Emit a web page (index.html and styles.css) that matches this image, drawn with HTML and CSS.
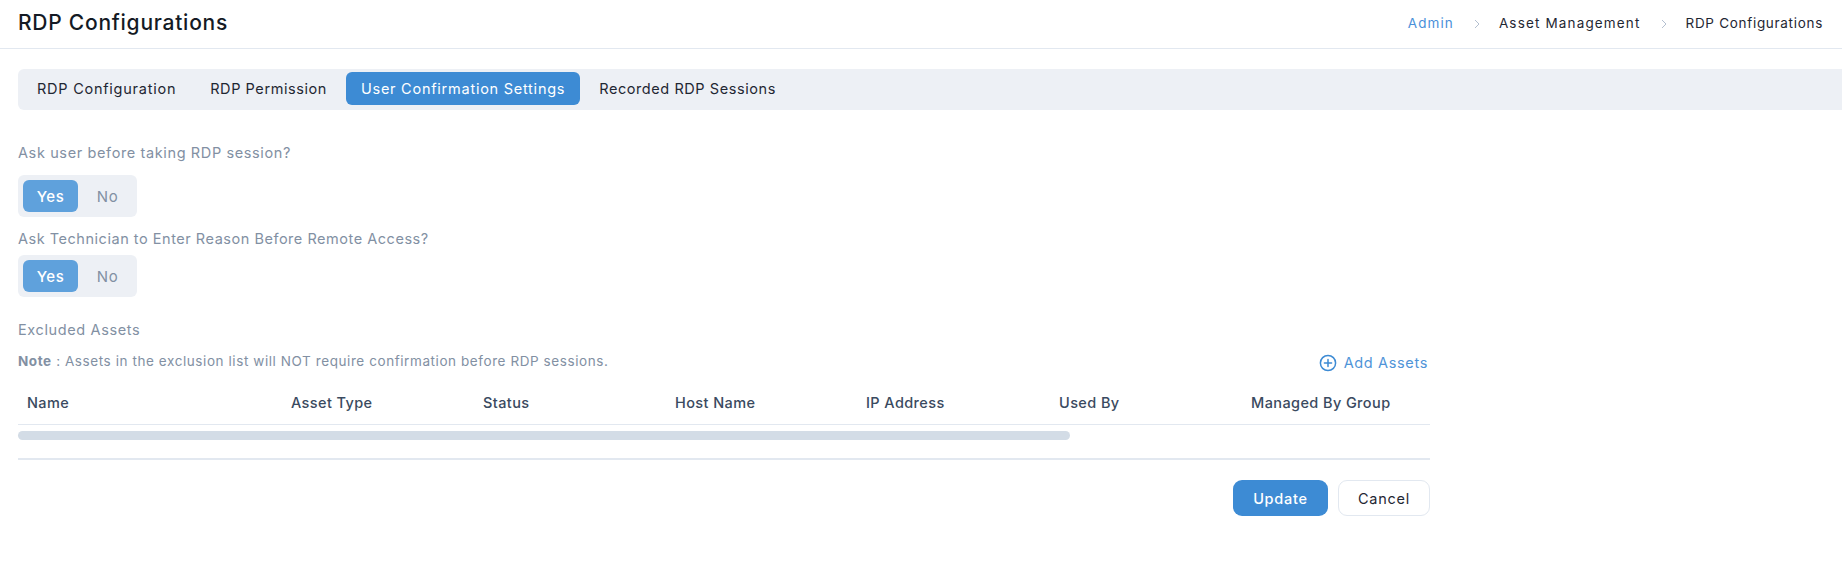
FILE: index.html
```html
<!DOCTYPE html>
<html lang="en">
<head>
<meta charset="utf-8">
<title>RDP Configurations</title>
<link rel="stylesheet" href="styles.css">
</head>
<body>
<header class="topbar">
  <h1 class="title">RDP Configurations</h1>
  <nav class="crumbs">
    <a class="crumb crumb-link">Admin</a>
    <svg class="sep" viewBox="0 0 8 10" width="8" height="10" fill="none" stroke="currentColor" stroke-width="1"><path d="M2 1l4 4-4 4"/></svg>
    <span class="crumb crumb-mid">Asset Management</span>
    <svg class="sep" viewBox="0 0 8 10" width="8" height="10" fill="none" stroke="currentColor" stroke-width="1"><path d="M2 1l4 4-4 4"/></svg>
    <span class="crumb">RDP Configurations</span>
  </nav>
</header>
<main class="content">
  <div class="tabs">
    <span class="tab">RDP Configuration</span>
    <span class="tab tab-tight">RDP Permission</span>
    <span class="tab tab-active">User Confirmation Settings</span>
    <span class="tab tab-tight">Recorded RDP Sessions</span>
  </div>
  <section class="form">
    <div class="label first">Ask user before taking RDP session?</div>
    <div class="toggle toggle-a"><span class="opt opt-on">Yes</span><span class="opt opt-off">No</span></div>
    <div class="label second">Ask Technician to Enter Reason Before Remote Access?</div>
    <div class="toggle toggle-b"><span class="opt opt-on">Yes</span><span class="opt opt-off">No</span></div>
    <div class="label third">Excluded Assets</div>
    <div class="note-row">
      <p class="note"><b>Note</b> : Assets in the exclusion list will NOT require confirmation before RDP sessions.</p>
      <a class="add">
        <svg class="add-icon" viewBox="0 0 18 18" width="18" height="18" fill="none" stroke="currentColor" stroke-width="1.5" stroke-linecap="round"><circle cx="9" cy="9" r="7.6"/><path d="M9 5.4v7.2M5.4 9h7.2"/></svg>
        <span class="add-text">Add Assets</span>
      </a>
    </div>
    <div class="table">
      <div class="thead">
        <span class="th c1">Name</span>
        <span class="th c2">Asset Type</span>
        <span class="th c3">Status</span>
        <span class="th c4">Host Name</span>
        <span class="th c5">IP Address</span>
        <span class="th c6">Used By</span>
        <span class="th c7">Managed By Group</span>
      </div>
      <div class="scroll"><div class="thumb"></div></div>
    </div>
    <div class="actions">
      <button class="btn btn-primary">Update</button>
      <button class="btn btn-plain">Cancel</button>
    </div>
  </section>
</main>
</body>
</html>
```
FILE: styles.css
```css
* { box-sizing: border-box; }
html, body { margin: 0; padding: 0; background: #fff; }
body { font-family: "Inter", "Liberation Sans", sans-serif; width: 1842px; height: 574px; overflow: hidden; color: #1f2733; }
.topbar { height: 49px; border-bottom: 1px solid #e2e8f0; display: flex; align-items: center; justify-content: space-between; padding: 0 19px 3px 18px; }
.title { margin: 0; font-size: 21px; line-height: 28px; font-weight: 500; letter-spacing: 0.75px; color: #141a24; }
.crumbs { display: flex; align-items: center; font-size: 13.5px; letter-spacing: 0.7px; color: #1f2733; }
.crumb-link { color: #4a90d9; letter-spacing: 1.1px; }
.crumb-mid { letter-spacing: 1.15px; }
.sep { color: #b4c0d0; margin: 2px 18px 0 19px; flex: none; }
.content { padding: 20px 0 0 18px; }
.tabs { height: 41px; background: #edf0f5; border-radius: 6px 0 0 6px; display: flex; align-items: flex-start; padding: 3px 0 0 4px; }
.tab { height: 33px; display: flex; align-items: center; padding: 0 15px; font-size: 14.5px; letter-spacing: 0.75px; color: #1f2733; border-radius: 6px; margin-right: 4px; }
.tab-tight { letter-spacing: 0.57px; }
.tab-active { background: #3d8bd4; color: #fff; }
.form { width: 1412px; }
.label { font-size: 14.5px; line-height: 20px; letter-spacing: 0.62px; color: #8290a3; }
.first { margin-top: 33px; }
.second { margin-top: 12px; letter-spacing: 0.53px; }
.third { margin-top: 23px; }
.toggle { width: 119px; height: 42px; background: #edf0f5; border-radius: 6px; display: flex; align-items: center; padding-left: 5px; font-size: 15px; letter-spacing: 0.5px; }
.toggle-a { margin-top: 12px; }
.toggle-b { margin-top: 6px; }
.opt { height: 32px; display: flex; align-items: center; justify-content: center; color: #8290a3; border-radius: 6px; }
.opt-on { width: 55px; background: #5fa1dc; color: #fff; font-weight: 500; }
.opt-off { flex: 1; }
.note-row { display: flex; justify-content: space-between; align-items: flex-start; margin-top: 11px; height: 20px; }
.note { margin: 0; font-size: 13.5px; line-height: 20px; letter-spacing: 0.58px; color: #8290a3; }
.note b { font-weight: 700; }
.add { display: flex; align-items: center; gap: 7px; height: 20px; padding-top: 4px; margin-right: 2px; color: #4f94d8; font-size: 14.5px; letter-spacing: 0.65px; }
.add-icon { color: #3d8bd4; flex: none; }
.add-text { margin-top: -1px; }
.table { margin-top: 11px; border-bottom: 2px solid #e2e8f0; height: 78px; }
.thead { display: flex; height: 43px; border-bottom: 1px solid #e2e8f0; padding-bottom: 1px; align-items: center; font-size: 14.5px; font-weight: 500; letter-spacing: 0.4px; color: #3a4a60; }
.th { padding-left: 9px; flex: none; }
.c1 { width: 264px; } .c2 { width: 192px; } .c3 { width: 192px; } .c4 { width: 191px; } .c5 { width: 193px; } .c6 { width: 192px; } .c7 { width: 188px; }
.scroll { padding-top: 6px; }
.thumb { width: 1052px; height: 9px; border-radius: 5px; background: #d3dce6; }
.actions { display: flex; justify-content: flex-end; gap: 10px; margin-top: 20px; }
.btn { height: 36px; border-radius: 9px; font: 500 14.5px "Inter", sans-serif; letter-spacing: 0.75px; }
.btn-primary { width: 95px; background: #3d8bd4; color: #fff; border: 0; }
.btn-plain { width: 92px; background: #fff; color: #1f2733; font-weight: 400; border: 1px solid #e2e8f0; }
```
